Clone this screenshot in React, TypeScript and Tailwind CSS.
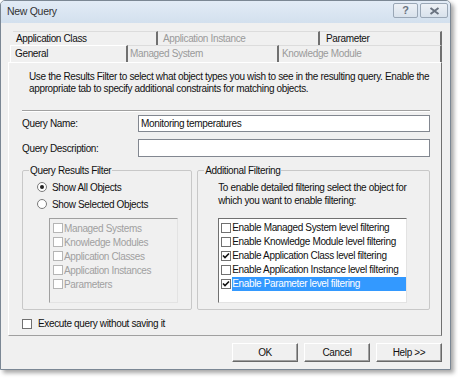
import React from 'react';

const font = { fontFamily: '"Liberation Sans", Arial, sans-serif' };

function Check({ checked, disabled }: { checked?: boolean; disabled?: boolean }) {
  return (
    <span
      className={`inline-flex items-center justify-center w-[10px] h-[10px] shrink-0 bg-white border ${
        disabled ? 'border-[#b5b5b5]' : 'border-[#707070]'
      }`}
    >
      {checked && (
        <svg width="8" height="8" viewBox="0 0 8 8">
          <path d="M1 3.5 L3 5.6 L7 1.5" stroke="#111" strokeWidth="1.6" fill="none" />
        </svg>
      )}
    </span>
  );
}

function Radio({ checked }: { checked?: boolean }) {
  return (
    <span className="inline-flex items-center justify-center w-[10px] h-[10px] rounded-full bg-white border border-[#7a7a7a] shrink-0">
      {checked && <span className="w-[4px] h-[4px] rounded-full bg-[#222]" />}
    </span>
  );
}

const leftItems = ['Managed Systems', 'Knowledge Modules', 'Application Classes', 'Application Instances', 'Parameters'];

const rightItems = [
  { label: 'Enable Managed System level filtering', checked: false },
  { label: 'Enable Knowledge Module level filtering', checked: false },
  { label: 'Enable Application Class level filtering', checked: true },
  { label: 'Enable Application Instance level filtering', checked: false },
  { label: 'Enable Parameter level filtering', checked: true, selected: true },
];

export default function App() {
  return (
    <div className="w-[458px] h-[378px] bg-white text-[10px] tracking-[-0.35px] text-[#111]" style={font}>
      <div className="w-[451px] h-[370px] bg-[#f0f0f0] border border-[#7b8794] rounded-t-[5px] shadow-[3px_3px_4px_rgba(0,0,0,0.35)] flex flex-col">
        {/* title bar */}
        <div className="h-[22px] bg-gradient-to-b from-[#e2ebf6] to-[#d3e0ee] rounded-t-[4px] flex items-center justify-between pl-[6px] pr-[2px]">
          <span className="text-[10.5px] tracking-[-0.3px] text-[#333]">New Query</span>
          <div className="flex gap-[2px] self-start mt-[2px]">
            <div className="w-[25px] h-[15px] border border-[#9aa7b6] rounded-[2px] bg-gradient-to-b from-[#edf1f6] to-[#d9e2ec] flex items-center justify-center text-[11px] font-bold text-[#6a7380] leading-none">
              ?
            </div>
            <div className="w-[28px] h-[15px] border border-[#9aa7b6] rounded-[2px] bg-gradient-to-b from-[#edf1f6] to-[#d9e2ec] flex items-center justify-center">
              <svg width="11" height="8" viewBox="0 0 11 8">
                <path d="M1.5 1 L9.5 7 M9.5 1 L1.5 7" stroke="#6a7380" strokeWidth="2" fill="none" />
              </svg>
            </div>
          </div>
        </div>

        {/* tabs */}
        <div className="mt-[8px] flex ml-[12px]">
          <div className="w-[145px] h-[14px] border-t border-t-[#dcdcdc] border-r-2 border-r-[#707070] pl-[3px] leading-[13px]">Application Class</div>
          <div className="w-[162px] h-[14px] border-t border-t-[#dcdcdc] border-r-2 border-r-[#707070] pl-[5px] leading-[13px] text-[#9a9a9a]">Application Instance</div>
          <div className="w-[122px] h-[14px] border-t border-t-[#dcdcdc] border-r-2 border-r-[#707070] pl-[6px] leading-[13px]">Parameter</div>
        </div>
        <div className="flex ml-[9px]">
          <div className="w-[118px] h-[17px] border-t border-t-[#ffffff] border-l border-l-white border-r-2 border-r-[#707070] pl-[4px] leading-[16px]">General</div>
          <div className="w-[151px] h-[17px] border-t border-t-[#dcdcdc] border-r-2 border-r-[#707070] pl-[2px] leading-[16px] text-[#9a9a9a]">Managed System</div>
          <div className="w-[163px] h-[17px] border-t border-t-[#dcdcdc] border-r-2 border-r-[#707070] pl-[3px] leading-[16px] text-[#9a9a9a]">Knowledge Module</div>
        </div>

        {/* panel */}
        <div className="ml-[7px] w-[434px] h-[274px] border border-l-white border-t-white border-r-[#707070] border-b-[#a0a0a0] pl-[13px] pr-[11px] pt-[8px]">
          <p className="pl-[7px] leading-[12px] whitespace-nowrap">
            Use the Results Filter to select what object types you wish to see in the resulting query. Enable the
            <br />
            appropriate tab to specify additional constraints for matching objects.
          </p>
          <div className="mt-[15px] h-[2px] border-t border-[#a0a0a0] border-b border-b-white" />

          <div className="mt-[3px] flex items-center">
            <span className="w-[116px]">Query Name:</span>
            <div className="flex-1 h-[17px] bg-white border border-[#828790] pl-[2px] leading-[15px]">Monitoring temperatures</div>
          </div>
          <div className="mt-[7px] flex items-center">
            <span className="w-[116px]">Query Description:</span>
            <div className="flex-1 h-[18px] bg-white border border-[#828790]" />
          </div>

          <div className="mt-[7px] flex gap-[5px]">
            <fieldset className="w-[171px] h-[146px] border border-[#c8c8c8] rounded-[2px] pl-[26px] pr-0 min-w-0">
              <legend className="ml-[-20px] px-[1px] leading-[13px]">Query Results Filter</legend>
              <div className="flex items-center gap-[5px] ml-[-12px] mt-[3px] h-[14px]">
                <Radio checked />
                <span>Show All Objects</span>
              </div>
              <div className="flex items-center gap-[5px] ml-[-12px] mt-[3px] h-[14px]">
                <Radio />
                <span>Show Selected Objects</span>
              </div>
              <div className="mt-[7px] w-[129px] h-[85px] bg-[#f0f0f0] border border-t-[#a0a0a0] border-l-[#a0a0a0] border-r-[#e3e3e3] border-b-[#e3e3e3] pt-[2px] pl-[3px]">
                {leftItems.map((it) => (
                  <div key={it} className="flex items-center gap-[1px] h-[14px] text-[#a0a0a0]">
                    <Check disabled />
                    <span>{it}</span>
                  </div>
                ))}
              </div>
            </fieldset>

            <fieldset className="w-[234px] h-[146px] border border-[#c8c8c8] rounded-[2px] pl-[20px] pr-0 min-w-0">
              <legend className="ml-[-14px] px-[1px] leading-[13px]">Additional Filtering</legend>
              <p className="leading-[13px] mt-[4px] whitespace-nowrap">
                To enable detailed filtering select the object for
                <br />
                which you want to enable filtering:
              </p>
              <div className="mt-[11px] w-[189px] h-[85px] bg-white border border-t-[#707070] border-l-[#707070] border-r-[#e3e3e3] border-b-[#e3e3e3] pt-[2px] pl-[2px]">
                {rightItems.map((it) => (
                  <div key={it.label} className="flex items-center gap-[1px] h-[14px]">
                    <Check checked={it.checked} />
                    <span className={`flex-1 h-[14px] leading-[14px] whitespace-nowrap ${it.selected ? 'bg-[#3399ff] text-white' : ''}`}>
                      {it.label}
                    </span>
                  </div>
                ))}
              </div>
            </fieldset>
          </div>

          <div className="mt-[6px] flex items-center gap-[6px]">
            <Check />
            <span>Execute query without saving it</span>
          </div>
        </div>

        {/* buttons */}
        <div className="mt-[7px] flex justify-end gap-[6px] pr-[8px]">
          {['OK', 'Cancel', 'Help >>'].map((b) => (
            <div
              key={b}
              className="w-[66px] h-[19px] border border-t-white border-l-white border-r-[#696969] border-b-[#696969] bg-[#f0f0f0] shadow-[inset_-1px_-1px_0_#a0a0a0] flex items-center justify-center"
            >
              {b}
            </div>
          ))}
        </div>
      </div>
    </div>
  );
}
